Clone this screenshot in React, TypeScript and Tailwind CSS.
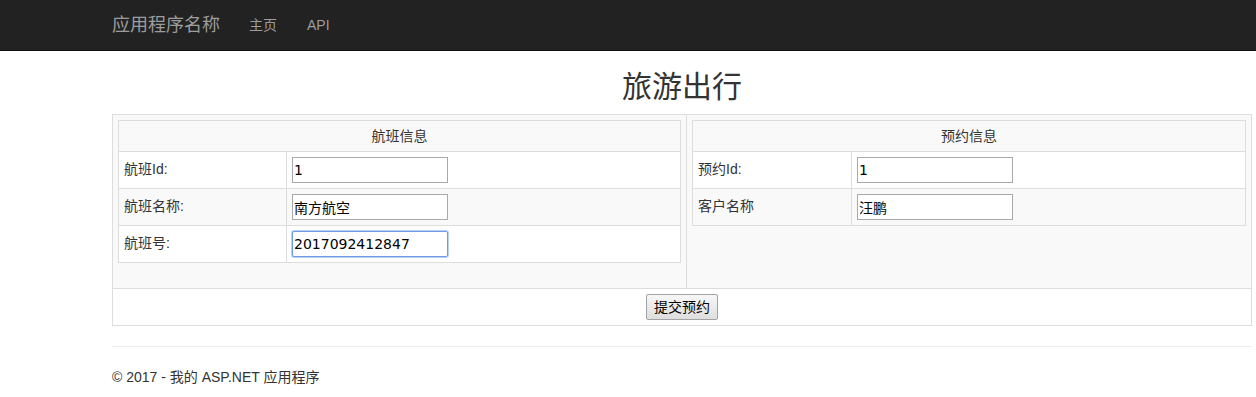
const font = { fontFamily: '"Liberation Sans", "Noto Sans CJK SC", sans-serif' };

type Field = { label: string; value: string; focused?: boolean };

const flight: Field[] = [
  { label: "航班Id:", value: "1" },
  { label: "航班名称:", value: "南方航空" },
  { label: "航班号:", value: "2017092412847", focused: true },
];

const booking: Field[] = [
  { label: "预约Id:", value: "1" },
  { label: "客户名称", value: "汪鹏" },
];

const InfoTable = ({ title, fields, labelWidth }: { title: string; fields: Field[]; labelWidth: string }) => (
  <table className="w-full border-collapse border border-[#dddddd] table-fixed">
    <colgroup>
      <col className={labelWidth} />
      <col />
    </colgroup>
    <thead>
      <tr className="bg-[#f9f9f9]">
        <th colSpan={2} className="border border-[#dddddd] p-[5px] text-center font-normal leading-[20px]">
          {title}
        </th>
      </tr>
    </thead>
    <tbody>
      {fields.map((f, i) => (
        <tr key={f.label} className={i % 2 === 1 ? "bg-[#f9f9f9]" : "bg-white"}>
          <td className="border border-[#dddddd] px-[5px] pt-[7px] pb-[3px] align-top leading-[20px]">
            {f.label}
          </td>
          <td className="border border-[#dddddd] p-[5px] align-top">
            <input
              defaultValue={f.value}
              className={
                f.focused
                  ? "block w-[156px] h-[26px] bg-white px-[1px] text-[14px] text-black border border-[#6f9be6] rounded-[2px] shadow-[0_0_0_1px_#bcd0f2] outline-none"
                  : "block w-[156px] h-[26px] bg-white px-[1px] text-[14px] text-black border border-[#a9a9a9] outline-none"
              }
              style={{ fontFamily: '"DejaVu Sans", "Noto Sans CJK SC", sans-serif' }}
            />
          </td>
        </tr>
      ))}
    </tbody>
  </table>
);

export default function App() {
  return (
    <div className="min-h-[397px] bg-white text-[14px] text-[#333333]" style={font}>
      <nav className="h-[51px] bg-[#222222] border-b border-[#101010]">
        <div className="flex h-full items-center pl-[112px]">
          <span className="text-[18px] text-[#9d9d9d]">应用程序名称</span>
          <a className="ml-[29px] text-[14px] text-[#9d9d9d]">主页</a>
          <a className="ml-[30px] text-[14px] text-[#9d9d9d]">API</a>
        </div>
      </nav>

      <div className="ml-[112px] w-[1140px]">
        <h2 className="mt-[19px] mb-[11px] text-center text-[30px] leading-[33px] text-[#333333]">旅游出行</h2>

        <table className="w-[1140px] border-collapse border border-[#dddddd] table-fixed">
          <colgroup>
            <col className="w-[574px]" />
            <col />
          </colgroup>
          <tbody>
            <tr className="bg-[#f9f9f9]">
              <td className="border border-[#dddddd] p-[5px] pb-[25px] align-top">
                <InfoTable title="航班信息" fields={flight} labelWidth="w-[168px]" />
              </td>
              <td className="border border-[#dddddd] p-[5px] align-top">
                <InfoTable title="预约信息" fields={booking} labelWidth="w-[159px]" />
              </td>
            </tr>
            <tr className="bg-white">
              <td colSpan={2} className="border border-[#dddddd] p-[5px] text-center">
                <button className="h-[26px] px-[7px] rounded-[2px] border border-[#a3a3a3] bg-gradient-to-b from-[#f7f7f7] to-[#dedede] text-[14px] text-black align-top">
                  提交预约
                </button>
              </td>
            </tr>
          </tbody>
        </table>

        <hr className="mt-[20px] border-t border-[#eeeeee]" />
        <p className="mt-[20px] leading-[20px]">© 2017 - 我的 ASP.NET 应用程序</p>
      </div>
    </div>
  );
}
